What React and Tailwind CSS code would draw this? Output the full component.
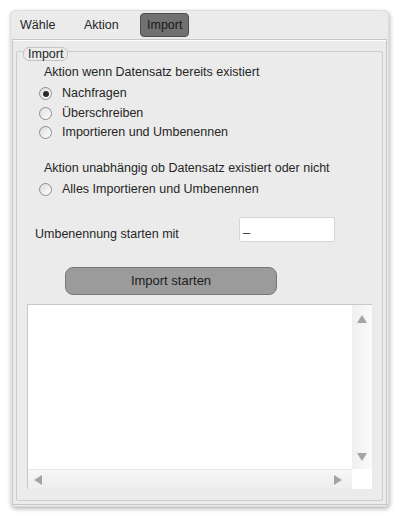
import React from "react";

function Radio({ checked, label }) {
  return (
    <div className="flex items-center h-[19.5px]">
      <div className="w-[13px] h-[13px] rounded-full border border-[#8e8e8e] bg-[linear-gradient(135deg,#dcdcdc,#ffffff)] flex items-center justify-center shrink-0">
        {checked && <div className="w-[6px] h-[6px] rounded-full bg-[#2a2a2a]" />}
      </div>
      <span className="ml-[10px]">{label}</span>
    </div>
  );
}

function Tri({ dir }) {
  const pts = {
    up: "0,8 5,0 10,8",
    down: "0,0 10,0 5,8",
    left: "8,0 8,10 0,5",
    right: "0,0 0,10 8,5",
  }[dir];
  const w = dir === "up" || dir === "down" ? 10 : 8;
  const h = dir === "up" || dir === "down" ? 8 : 10;
  return (
    <svg width={w} height={h} viewBox={`0 0 ${w} ${h}`}>
      <polygon points={pts} fill="#a4a4a4" />
    </svg>
  );
}

export default function App() {
  return (
    <div
      className="w-[400px] h-[516px] bg-white pt-[10px] pl-[10px] pr-[11px] pb-[9px] text-[12.5px] text-[#262626]"
      style={{ fontFamily: '"Liberation Sans", Arial, sans-serif' }}
    >
      <div className="w-full h-full flex flex-col rounded-[5px] bg-[#ebebeb] border border-[#dcdcdc] shadow-[1px_2px_4px_rgba(0,0,0,0.28)]">
        {/* Tabs */}
        <div className="h-[28px] flex items-center pl-[9px] shrink-0">
          <span className="w-[64px]">Wähle</span>
          <span className="w-[56px]">Aktion</span>
          <div className="h-[24px] px-[6px] flex items-center rounded-[4px] bg-[#717171] border border-[#4e4e4e] text-[#1a1a1a]">
            Import
          </div>
        </div>
        {/* Content panel */}
        <div className="flex-1 mx-[1px] mb-[1px] border border-[#c6c6c6] shadow-[inset_0_1px_0_#ffffff] pt-[11px] px-[3px] pb-[3px] flex flex-col">
          <div className="relative flex-1 border border-[#cdcdcd] rounded-[2px] flex flex-col">
            <div className="absolute left-[6px] top-[-5px] h-[14px] px-[4px] flex items-center rounded-[6px] border border-[#c4c4c4] bg-[#ebebeb] leading-none">
              Import
            </div>
            <div className="pt-[13px] pl-[27px] leading-[15px]">Aktion wenn Datensatz bereits existiert</div>
            <div className="pl-[22px] mt-[4px]">
              <Radio checked label="Nachfragen" />
              <Radio label="Überschreiben" />
              <Radio label="Importieren und Umbenennen" />
            </div>
            <div className="pl-[27px] mt-[18px] leading-[15px]">
              Aktion unabhängig ob Datensatz existiert oder nicht
            </div>
            <div className="pl-[22px] mt-[4px]">
              <Radio label="Alles Importieren und Umbenennen" />
            </div>
            <div className="flex items-end mt-[18px] pl-[18px]">
              <span className="w-[204px] leading-[15px]">Umbenennung starten mit</span>
              <div className="w-[96px] h-[25px] bg-white border border-[#d6d6d6] rounded-[2px] flex items-end pl-[3px] pb-[4px] text-[#333]">
                _
              </div>
            </div>
            <div className="pl-[48px] mt-[25px]">
              <div className="w-[212px] h-[28px] rounded-[8px] bg-[#9b9b9b] border border-[#777777] flex items-center justify-center text-[#1c1c1c] text-[13px]">
                Import starten
              </div>
            </div>
            {/* Text area */}
            <div className="ml-[10px] mt-[9px] w-[345px] h-[185px] border-t border-l border-[#c8c8c8] bg-white flex flex-col">
              <div className="flex-1 flex">
                <div className="flex-1 bg-white" />
                <div className="w-[20px] bg-[linear-gradient(90deg,#f0f0f0,#fafafa)] flex flex-col items-center justify-between pt-[10px] pb-[8px]">
                  <Tri dir="up" />
                  <Tri dir="down" />
                </div>
              </div>
              <div className="h-[20px] flex">
                <div className="flex-1 border-t border-[#e6e6e6] bg-[linear-gradient(180deg,#f6f6f6,#eeeeee)] flex items-center justify-between pl-[6px] pr-[10px]">
                  <Tri dir="left" />
                  <Tri dir="right" />
                </div>
                <div className="w-[20px] bg-white" />
              </div>
            </div>
            <div className="h-[11px]" />
          </div>
        </div>
      </div>
    </div>
  );
}
